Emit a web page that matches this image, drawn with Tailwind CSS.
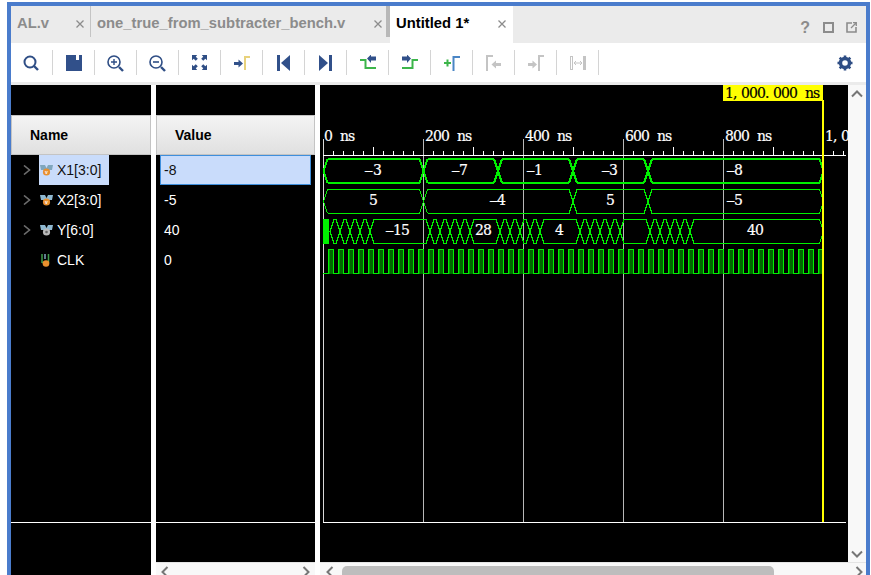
<!DOCTYPE html>
<html lang="en">
<head>
  <meta charset="UTF-8" />
  <title>Untitled 1*</title>
  <script src="https://cdn.jsdelivr.net/npm/@tailwindcss/browser@4"></script>
</head>
<body class="bg-white">
<div class="w-[871px] h-[575px] pl-[7px] pr-[1px] pt-[2px] bg-white overflow-hidden font-['Liberation_Sans',sans-serif]">
  <div class="h-[573px] border-4 border-b-0 border-[#4a7ccc] flex flex-col">

    <!-- Tabs -->
    <div class="h-[37px] flex bg-[#ebebeb] shrink-0">
      <div class="w-[80px] h-[31px] pl-[6px] pr-[6px] pt-[3px] flex items-center justify-between border-r border-[#c4c4c4] text-[14.8px] font-bold text-[#8c8c8c]">
        <span>AL.v</span>
        <svg width="8" height="8" viewBox="0 0 8 8" class="mt-[2px]"><path d="M0.5 0.5L7.5 7.5M7.5 0.5L0.5 7.5" stroke="#8c8c8c" stroke-width="1.3"/></svg>
      </div>
      <div class="w-[295px] h-[31px] pl-[6px] pr-[4px] pt-[3px] flex items-center justify-between text-[14.8px] font-bold text-[#8c8c8c]">
        <span>one_true_from_subtracter_bench.v</span>
        <svg width="8" height="8" viewBox="0 0 8 8" class="mt-[2px]"><path d="M0.5 0.5L7.5 7.5M7.5 0.5L0.5 7.5" stroke="#8c8c8c" stroke-width="1.3"/></svg>
      </div>
      <div class="w-[4px] h-[31px] bg-[#b8b8b8]"></div>
      <div class="w-[123px] bg-white pl-[6px] pr-[7px] pb-[3px] flex items-center justify-between text-[14.8px] font-bold text-black">
        <span>Untitled 1*</span>
        <svg width="8" height="8" viewBox="0 0 8 8" class="mt-[2px]"><path d="M0.5 0.5L7.5 7.5M7.5 0.5L0.5 7.5" stroke="#8c8c8c" stroke-width="1.3"/></svg>
      </div>
      <div class="flex-1 flex items-center justify-end gap-[12px] pr-[9px] pt-[6px]">
        <span class="text-[16px] font-bold text-[#8c8c8c] mr-[1px]">?</span>
        <svg width="11" height="11" viewBox="0 0 11 11"><rect x="1" y="1" width="9" height="9" fill="none" stroke="#8c8c8c" stroke-width="2"/></svg>
        <svg width="11" height="11" viewBox="0 0 11 11"><path d="M6 1H1V10H10V5" fill="none" stroke="#8c8c8c" stroke-width="1.6"/><path d="M5 6L10 1M7 0.7H10.3V4" fill="none" stroke="#8c8c8c" stroke-width="1.3"/></svg>
      </div>
    </div>

    <!-- Toolbar -->
    <div class="h-[39px] flex items-center bg-white shrink-0">
      <div class="w-[42px] h-[25px] flex items-center justify-center border-r border-[#d4d4d4]">
        <svg width="18" height="18" viewBox="0 0 18 18" class="mr-[2px]"><circle cx="8" cy="8" r="5.5" fill="none" stroke="#2f4e85" stroke-width="2"/><path d="M12 12L16 16" stroke="#2f4e85" stroke-width="2.4"/></svg>
      </div>
      <div class="w-[42px] h-[25px] flex items-center justify-center border-r border-[#d4d4d4]">
        <svg width="16" height="16" viewBox="0 0 16 16"><path d="M0 0H16V16H0Z" fill="#31508a"/><rect x="10" y="0" width="3" height="5" fill="#fff"/></svg>
      </div>
      <div class="w-[42px] h-[25px] flex items-center justify-center border-r border-[#d4d4d4]">
        <svg width="18" height="18" viewBox="0 0 18 18" class="mr-[2px]"><circle cx="8" cy="8" r="6" fill="none" stroke="#2f4e85" stroke-width="1.6"/><path d="M13 13L17 17" stroke="#2f4e85" stroke-width="2.4"/><path d="M5 8H11M8 5V11" stroke="#2f4e85" stroke-width="1.4"/></svg>
      </div>
      <div class="w-[42px] h-[25px] flex items-center justify-center border-r border-[#d4d4d4]">
        <svg width="18" height="18" viewBox="0 0 18 18" class="mr-[2px]"><circle cx="8" cy="8" r="6" fill="none" stroke="#2f4e85" stroke-width="1.6"/><path d="M13 13L17 17" stroke="#2f4e85" stroke-width="2.4"/><path d="M5 8H11" stroke="#2f4e85" stroke-width="1.6"/></svg>
      </div>
      <div class="w-[42px] h-[25px] flex items-center justify-center border-r border-[#d4d4d4]">
        <svg width="15" height="15" viewBox="0 0 16 16" fill="#2f4e85"><path d="M0 0H5.500L4 1.800L6.200 4L4 6.200L1.800 4L0 5.500Z"/><path d="M16 0H10.500L12 1.800L9.800 4L12 6.200L14.200 4L16 5.500Z"/><path d="M0 16H5.500L4 14.200L6.200 12L4 9.800L1.800 12L0 10.500Z"/><path d="M16 16H10.500L12 14.200L9.800 12L12 9.800L14.200 12L16 10.500Z"/></svg>
      </div>
      <div class="w-[42px] h-[25px] flex items-center justify-center border-r border-[#d4d4d4]">
        <svg width="16" height="16" viewBox="0 0 16 16"><path d="M0 7H4.500V4.500L9 8.500L4.500 12.500V10H0Z" fill="#31508a"/><path d="M11 15V2H16" fill="none" stroke="#e8d27c" stroke-width="2"/></svg>
      </div>
      <div class="w-[42px] h-[25px] flex items-center justify-center border-r border-[#d4d4d4]">
        <svg width="14" height="16" viewBox="0 0 14 16" fill="#31508a"><rect x="0" y="0" width="3" height="16"/><path d="M13 0V16L4 8Z"/></svg>
      </div>
      <div class="w-[42px] h-[25px] flex items-center justify-center border-r border-[#d4d4d4]">
        <svg width="14" height="16" viewBox="0 0 14 16" fill="#31508a"><rect x="10" y="0" width="3" height="16"/><path d="M0 0V16L9 8Z"/></svg>
      </div>
      <div class="w-[42px] h-[25px] flex items-center justify-center border-r border-[#d4d4d4]">
        <svg width="16" height="16" viewBox="0 0 16 16"><path d="M0 5H5.500V13H16" fill="none" stroke="#3cb54a" stroke-width="2"/><path d="M16 1.500V5.500H11V8L7 3.500L11 -0.500V1.500Z" fill="#31508a"/></svg>
      </div>
      <div class="w-[42px] h-[25px] flex items-center justify-center border-r border-[#d4d4d4]">
        <svg width="16" height="16" viewBox="0 0 16 16"><path d="M0 13H10.500V5H16" fill="none" stroke="#3cb54a" stroke-width="2"/><path d="M0 1.500V5.500H5V8L9 3.500L5 -0.500V1.500Z" fill="#31508a"/></svg>
      </div>
      <div class="w-[42px] h-[25px] flex items-center justify-center border-r border-[#d4d4d4]">
        <svg width="16" height="16" viewBox="0 0 16 16"><path d="M0 8H7M3.500 4.500V11.500" stroke="#3cb54a" stroke-width="2"/><path d="M9.500 16V2H16" fill="none" stroke="#4a86c5" stroke-width="2"/></svg>
      </div>
      <div class="w-[42px] h-[25px] flex items-center justify-center border-r border-[#d4d4d4]">
        <svg width="16" height="16" viewBox="0 0 16 16"><path d="M1 16V1H7" fill="none" stroke="#c4c4c4" stroke-width="2"/><path d="M15 8H10V5.500L5.500 9.500L10 13.500V11H15Z" fill="#c4c4c4"/></svg>
      </div>
      <div class="w-[42px] h-[25px] flex items-center justify-center border-r border-[#d4d4d4]">
        <svg width="16" height="16" viewBox="0 0 16 16"><path d="M0 8H4.500V5.500L9 9.500L4.500 13.500V11H0Z" fill="#c4c4c4"/><path d="M11 16V1H16" fill="none" stroke="#c4c4c4" stroke-width="2"/></svg>
      </div>
      <div class="w-[42px] h-[25px] flex items-center justify-center border-r border-[#d4d4d4]">
        <svg width="16" height="14" viewBox="0 0 16 14"><rect x="0.500" y="0.500" width="2" height="13" fill="none" stroke="#c4c4c4"/><rect x="13" y="0" width="3" height="14" fill="#c4c4c4"/><path d="M4 7H12M6 5L4 7L6 9M10 5L12 7L10 9" fill="none" stroke="#c4c4c4"/></svg>
      </div>
      <div class="ml-auto mr-[13px] flex">
        <svg width="16" height="16" viewBox="0 0 16 16"><circle cx="8" cy="8" r="4.500" fill="none" stroke="#2f4e85" stroke-width="3.400"/><path d="M8 0.500V3M8 13V15.500M0.500 8H3M13 8H15.500M2.700 2.700L4.500 4.500M11.500 11.500L13.300 13.300M13.300 2.700L11.500 4.500M4.500 11.500L2.700 13.300" stroke="#2f4e85" stroke-width="2.600"/></svg>
      </div>
    </div>
    <div class="h-[3px] bg-[#ebebeb] shrink-0"></div>

    <!-- Panes -->
    <div class="flex-1 flex min-h-0">

      <!-- Name column -->
      <div class="w-[140px] bg-black flex flex-col text-[14px] text-white">
        <div class="h-[30px] shrink-0"></div>
        <div class="h-[40px] shrink-0 pl-[18px] flex items-center border border-[#c4c4c4] bg-linear-to-b from-[#f4f4f4] to-[#e0e0e0] font-bold text-black">Name</div>
        <div class="flex-1 border-b border-white">
          <div class="h-[30px] flex items-center pl-[12px]">
            <svg width="8" height="10" viewBox="0 0 8 10" class="mr-[8px]"><path d="M1 0.500L6.500 5L1 9.500" fill="none" stroke="#6e6e6e" stroke-width="1.600"/></svg>
            <div class="h-full w-[70px] pl-[1px] flex items-center gap-[4px] bg-[#c9dcfb] text-[#111]">
              <svg width="13" height="11" viewBox="0 0 13 11"><path d="M0 0H5L6.500 3L8 0H13L12 5H9L6.500 8L4 5H1Z" fill="#7fa6bd"/><circle cx="6.500" cy="7" r="3.600" fill="#e88f2e"/><text x="6.500" y="9" text-anchor="middle" font-size="5" font-weight="700" fill="#fff">v</text></svg>
              <span>X1[3:0]</span>
            </div>
          </div>
          <div class="h-[30px] flex items-center pl-[12px]">
            <svg width="8" height="10" viewBox="0 0 8 10" class="mr-[8px]"><path d="M1 0.500L6.500 5L1 9.500" fill="none" stroke="#6e6e6e" stroke-width="1.600"/></svg>
            <div class="h-full pl-[1px] flex items-center gap-[4px]">
              <svg width="13" height="11" viewBox="0 0 13 11"><path d="M0 0H5L6.500 3L8 0H13L12 5H9L6.500 8L4 5H1Z" fill="#8fb8d0"/><circle cx="6.500" cy="7" r="3.600" fill="#e88f2e"/><text x="6.500" y="9" text-anchor="middle" font-size="5" font-weight="700" fill="#fff">v</text></svg>
              <span>X2[3:0]</span>
            </div>
          </div>
          <div class="h-[30px] flex items-center pl-[12px]">
            <svg width="8" height="10" viewBox="0 0 8 10" class="mr-[8px]"><path d="M1 0.500L6.500 5L1 9.500" fill="none" stroke="#6e6e6e" stroke-width="1.600"/></svg>
            <div class="h-full pl-[1px] flex items-center gap-[4px]">
              <svg width="13" height="11" viewBox="0 0 13 11"><path d="M0 0H5L6.500 3L8 0H13L12 5H9L6.500 8L4 5H1Z" fill="#8fb8d0"/><circle cx="6.500" cy="7" r="3.600" fill="#b9b9b9"/><circle cx="6.500" cy="7" r="1.300" fill="#666"/></svg>
              <span>Y[6:0]</span>
            </div>
          </div>
          <div class="h-[30px] flex items-center pl-[29px] gap-[4px]">
            <svg width="11" height="13" viewBox="0 0 11 13"><path d="M2 0V9M8.500 0V9M2 8.500H8.500" fill="none" stroke="#3f9a4a" stroke-width="1.500"/><path d="M5 0V5" stroke="#7fa6bd" stroke-width="1.500"/><circle cx="6" cy="9.500" r="3.300" fill="#e88f2e"/></svg>
            <span class="ml-[2px]">CLK</span>
          </div>
        </div>
        <div class="h-[52px] shrink-0"></div>
      </div>
      <div class="w-[5px] bg-white shrink-0"></div>

      <!-- Value column -->
      <div class="w-[159px] flex flex-col text-[14px] text-white">
        <div class="flex-1 bg-black flex flex-col">
          <div class="h-[30px] shrink-0"></div>
          <div class="h-[40px] shrink-0 pl-[18px] flex items-center border border-[#c4c4c4] bg-linear-to-b from-[#f4f4f4] to-[#e0e0e0] font-bold text-black">Value</div>
          <div class="flex-1 border-b border-white px-[4px]">
            <div class="h-[30px] pl-[3px] flex items-center border border-[#3f8fdc] bg-[#c9dcfb] text-[#111]">-8</div>
            <div class="h-[30px] pl-[4px] flex items-center">-5</div>
            <div class="h-[30px] pl-[4px] flex items-center">40</div>
            <div class="h-[30px] pl-[4px] flex items-center">0</div>
          </div>
          <div class="h-[39px] shrink-0"></div>
        </div>
        <div class="h-[13px] shrink-0 border-t border-[#e4e4e4] bg-[#f8f8f8] flex justify-between px-[5px] pt-[3px] overflow-hidden">
          <svg width="8" height="12" viewBox="0 0 8 12" class="shrink-0"><path d="M6.500 1L1.500 6L6.500 11" fill="none" stroke="#767676" stroke-width="2"/></svg>
          <svg width="8" height="12" viewBox="0 0 8 12" class="shrink-0"><path d="M1.500 1L6.500 6L1.500 11" fill="none" stroke="#767676" stroke-width="2"/></svg>
        </div>
      </div>
      <div class="w-[5px] bg-white shrink-0"></div>

      <!-- Waveform -->
      <div class="flex-1 flex flex-col min-w-0">
        <div class="flex-1 flex min-h-0">
          <svg id="wave" width="528" height="477" viewBox="320 85 528 477" class="bg-black block shrink-0" shape-rendering="crispEdges">
            <g id="grid"></g>
            <clipPath id="upto"><rect x="320" y="85" width="503" height="477"/></clipPath>
            <g id="traces" clip-path="url(#upto)" fill="none"></g>
            <g font-family="'DejaVu Serif',serif" font-size="14" fill="#fff" stroke="#fff" stroke-width="0.2">
              <text x="324 332 340 348 356" y="141">0 ns</text>
              <text x="425 433 441 449 457 465" y="141">200 ns</text>
              <text x="525 533 541 549 557 565" y="141">400 ns</text>
              <text x="625 633 641 649 657 665" y="141">600 ns</text>
              <text x="725 733 741 749 757 765" y="141">800 ns</text>
              <text x="825 833 841" y="141">1,0</text>
              <text y="174.500"><tspan x="363.500" font-size="12">−</tspan><tspan x="373">3</tspan></text>
              <text y="174.500"><tspan x="450.500" font-size="12">−</tspan><tspan x="459">7</tspan></text>
              <text y="174.500"><tspan x="525.500" font-size="12">−</tspan><tspan x="534">1</tspan></text>
              <text y="174.500"><tspan x="600.500" font-size="12">−</tspan><tspan x="609">3</tspan></text>
              <text y="174.500"><tspan x="725.500" font-size="12">−</tspan><tspan x="734">8</tspan></text>
              <text x="369" y="204.500">5</text>
              <text y="204.500"><tspan x="488.500" font-size="12">−</tspan><tspan x="497">4</tspan></text>
              <text x="606" y="204.500">5</text>
              <text y="204.500"><tspan x="725.500" font-size="12">−</tspan><tspan x="734">5</tspan></text>
              <text y="234.500"><tspan x="384.500" font-size="12">−</tspan><tspan x="393 401">15</tspan></text>
              <text x="475 483" y="234.500">28</text>
              <text x="555" y="234.500">4</text>
              <text x="747 755" y="234.500">40</text>
            </g>
            <rect x="723" y="85" width="100" height="16" fill="#ffff00"/>
            <text x="725 733 741 749 757 765 773 781 789 797 805 813" y="98" font-family="'DejaVu Serif',serif" font-size="14" fill="#000" stroke="#000" stroke-width="0.2">1,000.000 ns</text>
            <rect x="822" y="100" width="2" height="422" fill="#ffff00"/>
          </svg>
          <div class="flex-1 bg-[#f8f8f8] flex flex-col items-center justify-between pt-[5px] pb-[4px]">
            <svg width="12" height="8" viewBox="0 0 12 8"><path d="M1 6.500L6 1.500L11 6.500" fill="none" stroke="#767676" stroke-width="2"/></svg>
            <svg width="12" height="8" viewBox="0 0 12 8"><path d="M1 1.500L6 6.500L11 1.500" fill="none" stroke="#767676" stroke-width="2"/></svg>
          </div>
        </div>
        <div class="h-[13px] shrink-0 border-t border-[#e4e4e4] bg-[#f8f8f8] flex pl-[6px] pr-[3px] pt-[3px] overflow-hidden">
          <svg width="8" height="12" viewBox="0 0 8 12" class="shrink-0"><path d="M6.500 1L1.500 6L6.500 11" fill="none" stroke="#767676" stroke-width="2"/></svg>
          <div class="w-[432px] h-[14px] ml-[8px] rounded-[5px] bg-[#bdbdbd] shrink-0"></div>
          <svg width="8" height="12" viewBox="0 0 8 12" class="shrink-0 ml-auto"><path d="M1.500 1L6.500 6L1.500 11" fill="none" stroke="#767676" stroke-width="2"/></svg>
        </div>
      </div>
    </div>
  </div>
</div>

<script>
  // Waveform geometry, in page coordinates (0.5 px per ns, time 0 at x=323)
  const NS = 'http://www.w3.org/2000/svg';
  const GREEN = '#00f000';

  function add(parent, tag, attrs) {
    const el = document.createElementNS(NS, tag);
    for (const k in attrs) el.setAttribute(k, attrs[k]);
    parent.appendChild(el);
  }

  const grid = document.getElementById('grid');
  const traces = document.getElementById('traces');

  // grid lines
  for (let x = 323.5; x < 830; x += 100) {
    add(grid, 'path', { d: `M${x} 139V522`, stroke: x === 323.5 ? '#d8d8d8' : '#b8b8b8', fill: 'none' });
  }
  // axis + ticks
  add(grid, 'path', { d: 'M323 155.500H846M323 522.500H846', stroke: '#fff', fill: 'none' });
  for (let i = 0, x = 323.5; x < 846; i++, x += 10) {
    if (i % 10 === 0) continue;
    add(grid, 'path', { d: `M${x} ${i % 5 === 0 ? 147 : 151}V155`, stroke: '#fff', fill: 'none' });
  }

  // bus trace: flat runs as rects, transitions as diagonals
  function bus(edges, top, bot, width) {
    const mid = (top + bot) / 2;
    for (let i = 0; i < edges.length - 1; i++) {
      const a = edges[i], b = edges[i + 1];
      const tt = Math.floor(top - width / 2 + 0.01), bt = Math.floor(bot - width / 2 + 0.01);
      add(traces, 'rect', { x: a + 4, y: tt, width: b - a - 8, height: width, fill: GREEN });
      add(traces, 'rect', { x: a + 4, y: bt, width: b - a - 8, height: width, fill: GREEN });
      add(traces, 'path', {
        d: `M${a + 4} ${top}L${a} ${mid}L${a + 4} ${bot}M${b - 4} ${top}L${b} ${mid}L${b - 4} ${bot}`,
        stroke: GREEN, 'stroke-width': width
      });
    }
  }
  bus([323.5, 423.5, 498, 573, 648, 823.5], 159, 183, 2);
  bus([323.5, 423.5, 573, 648, 823.5], 189.5, 213.5, 1);
  bus([330, 340, 350, 360, 370, 430, 440, 450, 460, 470, 500, 510, 520, 530, 540, 580, 590, 600, 610, 620, 650, 660, 670, 680, 690, 823.5], 219.5, 243.5, 1);
  add(traces, 'rect', { x: 323, y: 219, width: 6, height: 25, fill: GREEN });

  // clock: low to 328, then 10 px period
  let d = 'M323 273.500H328.500';
  for (let x = 328; x < 823; x += 10) {
    add(traces, 'rect', { x: x + 1, y: 250, width: 5, height: 24, fill: '#009a00' });
    add(traces, 'rect', { x: x + 2, y: 250, width: 3, height: 24, fill: '#006800' });
    d += `M${x + 0.5} 273.500V249.500H${x + 5.5}V273.500H${x + 10.5}`;
  }
  add(traces, 'path', { d, stroke: GREEN });
</script>
</body>
</html>
